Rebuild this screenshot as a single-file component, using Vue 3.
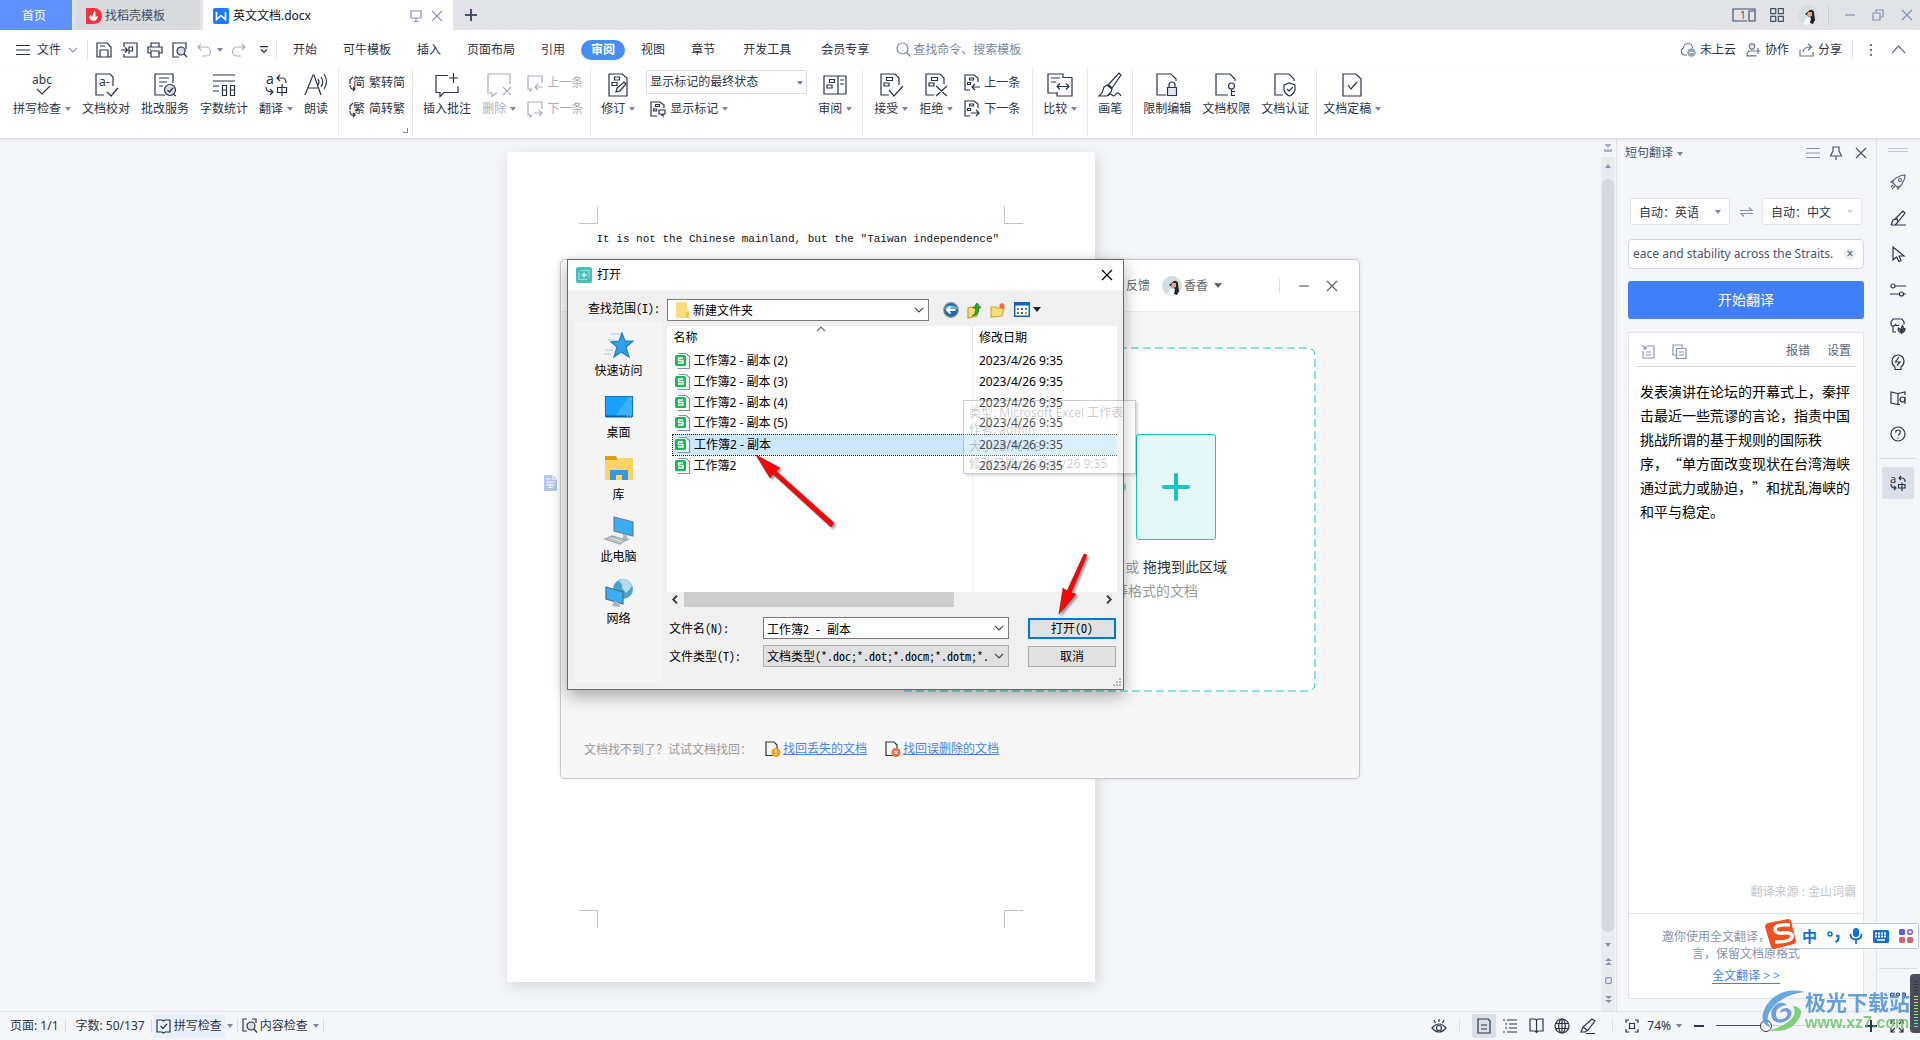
<script setup>
import { h, ref } from 'vue'

const icons = {
  menu: [14, 12, '<path d="M0 1.5h14M0 6h14M0 10.5h14"/>'],
  chev: [10, 6, '<path d="M1 .8l4 4 4-4"/>'],
  chevUp: [15, 9, '<path d="M1 8l6.5-7L14 8"/>'],
  save: [16, 16, '<path d="M1 1h10l4 4v10H1zM4 15V8h8v7M4 4h5"/>'],
  exportPdf: [17, 16, '<path d="M3 5V1h13v14H3v-3M0 8h6M4 5.5L6.500 8 4 10.500M8 12V5h3.500v4H8"/>'],
  print: [16, 16, '<path d="M4 5V1h8v4M4 11H1V5h14v6h-3M4 9h8v6H4zM3 7.500h1"/>'],
  preview: [16, 16, '<path d="M7 15H1V1h13v6"/><circle cx="9" cy="9" r="4" fill="#d9dce2"/><path d="M12 12l3 3"/>'],
  undo: [14, 14, '<path d="M4 1L1 4l3 3M1 4h8a4 4 0 0 1 0 9H5"/>'],
  redo: [14, 14, '<path d="M10 1l3 3-3 3M13 4H5a4 4 0 0 0 0 9h4"/>'],
  more: [8, 8, '<path d="M0 .7h8M1 3.500L4 6.500 7 3.500"/>'],
  search: [15, 15, '<circle cx="6.500" cy="6.500" r="5.500"/><path d="M10.500 10.500l4 4"/>'],
  abc: [24, 24, '<text x="12" y="11" text-anchor="middle" font-size="12" fill="currentColor" stroke="none">abc</text><path d="M7 16l5 5 8-8"/>'],
  proof: [24, 24, '<path d="M10 22H2V1h14l3 3v9"/><text x="5" y="13" font-size="12" fill="currentColor" stroke="none">a-</text><path d="M13 19l4 4 7-8"/>'],
  service: [24, 24, '<path d="M12 22H2V1h18v9M6 5h10M6 9h8M6 13h4"/><circle cx="17" cy="17" r="5.500" fill="#d9dce2"/><path d="M14.500 17l2 2 3.500-4M20 21l3 2"/>'],
  count: [24, 24, '<path d="M1 2h22M1 8h22M1 13h6M1 18h6M10.500 12.500h4v10h-4zM18.500 12.500h4v10h-4zM10.500 17h4M18.500 17h4"/>'],
  trans: [24, 24, '<text x="2" y="11" font-size="14" fill="currentColor" stroke="none">a</text><path d="M16 2l-3 3 3 3M13 5h5q4 0 4 5M2 14q0 5 6 5M6 16l3 3-3 3M13.500 14.500h9v5h-9zM18 11v12"/>'],
  transSm: [16, 16, '<text x="0" y="8" font-size="11" fill="currentColor" stroke="none">a</text><path d="M11 1L9 3l2 2M9 3h3q3 0 3 4M1 9q0 4 4 4M4 11l2 2-2 2M8.500 9.500h6.500v3.500H8.500zM12 7.500V16"/>'],
  read: [24, 24, '<path d="M1 22L9 2h1l7 20M4 15h10M14 6q2 3 0 6M17 4q3.500 5 0 10M20 1q5 7 0 15"/>'],
  toSimp: [16, 18, '<text x="4" y="13" font-size="12" fill="currentColor" stroke="none">简</text><path d="M4 3L1 6v4M1 11q0 5 5 4M4 13l2 2-2 2"/>'],
  toTrad: [16, 18, '<text x="4" y="13" font-size="12" fill="currentColor" stroke="none">繁</text><path d="M4 3L1 6v4M1 11q0 5 5 4M4 13l2 2-2 2"/>'],
  addNote: [24, 24, '<path d="M13 2.500H1v17h4v4l4-4h14v-6M18.500 0v10M14 5h9"/>'],
  delNote: [24, 24, '<path d="M23 11V1H1v19h4v3.500l5-4M16 14l8 8M24 14l-8 8"/>'],
  notePrev: [16, 16, '<path d="M15 8V1H1v13h2v2l2-2M16 12H8M11 9l-3 3 3 3"/>'],
  noteNext: [16, 16, '<path d="M15 8V1H1v13h2v2l2-2M7 12h8M12 9l3 3-3 3"/>'],
  revise: [20, 24, '<path d="M1 1h13l5 4v18H1zM6.500 4h5v3h-5zM4 9.500h5v3H4z"/><path d="M8 19l1-4 7-6 2 2-6 7z" fill="#e3e5ea"/>'],
  showMark: [16, 16, '<path d="M7 15H1V1h9l4 3v3M5.500 3.500h4v2h-4zM3.500 8h3v2h-3zM9 9h6v4h-2v2l-2-2H9z"/>'],
  pane: [24, 24, '<path d="M1 3h22v18H1zM15 3v18M17 7h4M17 11h4M6.500 6.500h5v3h-5zM4 12h5v3H4z"/>'],
  accept: [24, 24, '<path d="M10 22H2V1h14l4 4v7M7.500 4.500h6v3h-6zM5 10h5v3H5zM10 17l5 6 9-10"/>'],
  reject: [24, 24, '<path d="M10 22H2V1h14l4 4v6M7.500 4.500h6v3h-6zM5 10h5v3H5zM12 13l11 10M23 13L12 23"/>'],
  revPrev: [16, 18, '<path d="M6 16H1V1h9l4 3v4M5.500 4h4v2h-4zM3.500 8.500h3v2h-3zM16 13H8M11 10l-3 3 3 3"/>'],
  revNext: [16, 18, '<path d="M6 16H1V1h9l4 3v4M5.500 4h4v2h-4zM3.500 8.500h3v2h-3zM7 13h8M12 10l3 3-3 3"/>'],
  compare: [26, 24, '<path d="M16 5V1H1v19h9M16 4.500h9V23H10v-4M4 5h9M4 9h5M10 13.500h12M13 10.500l-3 3 3 3M19 10.500l3 3-3 3"/>'],
  brush: [24, 24, '<path d="M10 12L21 0l2 2-9 13M6 14l3-2 5 4-1 3-4 4H1l3-3zM9 12q4 0 5 4M10 23q2-3 4-1t4-1 5 2"/>'],
  lock: [22, 24, '<path d="M10 22H1V1h14l5 5v2M13 14v-2q0-3 3-3t3 3v2"/><path d="M11.500 14.500h9v8h-9z" fill="#e3e5ea"/>'],
  key: [22, 24, '<path d="M13 22H1V1h14l5 5v2"/><circle cx="16.500" cy="13" r="3"/><path d="M16.500 16v7M16.500 18.500H20M16.500 22.500H20"/>'],
  shield: [22, 24, '<path d="M9 22H1V1h14l5 5v2M15.500 10l5.500 2v5q-1 4-5.500 6-4.500-2-5.500-6v-5zM13 16l2 2 4-4"/>'],
  final: [20, 24, '<path d="M1 1h13l5 5v17H1zM6 12l3 4 6-7"/>'],
  switcher: [24, 14, '<path d="M15 13H1V1h22v12h-6V3h5"/><text x="8" y="11" font-size="10" fill="currentColor" stroke="none">1</text>'],
  apps: [14, 14, '<path d="M.7.700h5v5h-5zM8.300.700h5v5h-5zM.7 8.300h5v5h-5zM8.300 8.300h5v5h-5z"/>'],
  min: [10, 10, '<path d="M0 5h10"/>'],
  restore: [12, 12, '<path d="M1 4h7v7H1zM4 4V1h7v7H8"/>'],
  close: [12, 12, '<path d="M1 1l10 10M11 1L1 11"/>'],
  monitor: [12, 12, '<path d="M1 1h10v7H1zM6 8v3M3.500 11.500h5"/>'],
  plus: [12, 12, '<path d="M6 0v12M0 6h12" stroke-width="2"/>'],
  cloud: [16, 14, '<path d="M7 12H4.500a3.700 3.700 0 0 1-1-7 4.500 4.500 0 0 1 9 0"/><circle cx="11.500" cy="9.500" r="4.300" fill="#98a1b8" stroke="none"/><path d="M9.500 9.500h4" stroke="#fff"/>'],
  people: [15, 14, '<circle cx="6" cy="3.500" r="2.700"/><path d="M9 8H5q-4 0-4 4.800h9.500M12 5v6M9.500 8h5"/>'],
  share: [15, 14, '<path d="M1 7v6h13V9M4 9q0-5 8-5M9 .8L12.500 4 9 7.200"/>'],
  dots: [4, 14, '<path d="M1 1h2v2H1zM1 6h2v2H1zM1 11h2v2H1z" fill="currentColor" stroke="none"/>'],
  pin: [14, 14, '<path d="M4 1h6v4l2.500 5h-11L4 5zM7 10v4"/>'],
  swap: [13, 10, '<path d="M0 3.500h12L9 .5M13 6.500H1l3 3"/>'],
  insert: [14, 15, '<path d="M6 2h7v12H2V7M1 1l4 4M5 2v3H2M5 8h5M5 11h5"/>'],
  copy: [15, 15, '<path d="M4 11H1V1h9v3M4.500 4.500h9.500v10H4.500zM7 8h5M7 11h5"/>'],
  handle: [20, 6, '<path d="M0 1.500h20M0 4.500h20" stroke="#c3c8d2"/>'],
  rocket: [16, 16, '<path d="M5 11L3 9q0-4 5-6 3-2 7-2 0 4-2 7-2 5-6 5zM4 6L1 8l2 1M10 12l-2 3-1-2M1 13l2-2M2 15l3-3"/><circle cx="10" cy="6" r="1.500"/>'],
  pen: [16, 16, '<path d="M1 15h15M1 15l2-5 4-1 1 3-3 3M5 9L13 1l2 2-7 9"/>'],
  cursor: [14, 16, '<path d="M2 1v13l3.500-3 2.500 4.500 2-1-2-4.500h5z"/>'],
  sliders: [16, 14, '<circle cx="3" cy="3" r="2"/><circle cx="11.500" cy="11" r="2"/><path d="M5 3h11M0 11h9.500M13.500 11H16"/>'],
  store: [16, 16, '<path d="M6 14H3V8M3 8Q1 8 1 5.500V4l2-3h9l2 3v2.500M3 8q2 0 2.500-1.500Q7 8.500 9 7"/><path d="M11.500 15q-4.500-2-3-5 2.500 1 3 5-1-5 1-7.500 2 3-1 7.500 0-4 3.500-4.500 0 3.500-3.500 4.500z" fill="#9aa1b1"/>'],
  bulb: [14, 16, '<path d="M4 13q-3-2-3-6a6 6 0 0 1 12 0q0 4-3 6v2.500H4zM8 3L4.500 8H9L6 11.500"/>'],
  book: [16, 14, '<path d="M8 2.500L1 1v11l7 1.500zM8 2.500L15 1v3M8 13.500h2"/><circle cx="12.500" cy="8.500" r="2.500"/><path d="M15 6v7"/>'],
  help: [16, 16, '<circle cx="8" cy="8" r="7"/><path d="M5.700 6.500q0-2.500 2.300-2.500t2.300 2-2.300 3.500M8 11.500v1"/>'],
  dots3: [16, 5, '<circle cx="2" cy="2.500" r="1.500"/><circle cx="8" cy="2.500" r="1.500"/><circle cx="14" cy="2.500" r="1.500"/>'],
  bookCheck: [15, 14, '<path d="M6 1H1v12h5l1.500 1 1.500-1h5V1H9L7.500 2zM4.500 7l2.500 2.500L11 5"/>'],
  bookFind: [15, 15, '<path d="M5 1H1v12h4M10 1h4v4"/><circle cx="9" cy="8" r="4" fill="#d9dce2"/><path d="M12 11l3 3.500"/>'],
  eye: [16, 16, '<path d="M1 10q7-8 14 0-7 8-14 0z"/><circle cx="8" cy="10" r="2.500"/><path d="M8 1v3M3 2l1.500 3M13 2l-1.500 3"/>'],
  pageView: [14, 16, '<path d="M1 1h10l2 2v12H1zM4 7h6M4 11h6"/>'],
  outline: [14, 14, '<path d="M0 1h2M4 1h10M2 5h2M6 5h8M2 9h2M6 9h8M0 13h2M4 13h10"/>'],
  webBook: [15, 15, '<path d="M7.500 2L6 1H1v12h5l1.500 1.500L9 13h5V1H9zM7.500 2v12"/>'],
  globe: [16, 16, '<circle cx="8" cy="8" r="7"/><ellipse cx="8" cy="8" rx="3.300" ry="7"/><path d="M1.500 5.500h13M1.500 10.500h13M8 1v14"/>'],
  penLine: [16, 16, '<path d="M1 14l2-5L12 1l3 2-7 9-3 2zM3 9l4 3M6 15.500h9"/>'],
  fit: [14, 14, '<path d="M1 4V1h3M10 1h3v3M13 10v3h-3M4 13H1v-3M4.500 4.500h5v5h-5z"/>'],
  full: [14, 14, '<path d="M1 5V1h4M9 1h4v4M13 9v4H9M5 13H1V9M1 1l4 4M13 1L9 5M13 13L9 9M1 13l4-4"/>'],
  split: [8, 9, '<path d="M1 0h6v1L4 4 1 1zM0 8V5h2v1h1V5h2v1h1V5h2v3z" fill="#a9b1c3" stroke="none"/>'],
  dblUp: [7, 8, '<path d="M3.500 0L7 3H0zM3.500 4L7 7H0z" fill="currentColor" stroke="none"/>'],
  dblDown: [7, 8, '<path d="M3.500 4L7 1H0zM3.500 8L7 5H0z" fill="currentColor" stroke="none"/>'],
  square: [7, 7, '<rect x=".7" y=".7" width="5.600" height="5.600" rx="1"/>'],
  docTag: [13, 16, '<path d="M0 0h9l4 4v12H0z" fill="#b3c7ea" stroke="none"/><path d="M9 0v4h4M2.500 4h4M2.500 7h8M2.500 10h8M6.500 9v4M4 12.500h5" stroke="#fff"/>'],
  docer: [16, 16, '<path d="M0 0h8a8 8 0 0 1 0 16H0z" fill="#f4333f" stroke="none"/><path d="M7 13q-5-2-3-6 3 1 3 6zM7 13Q5 7 9 2.500 11 8 7 13zM7 13q0-4 5-5-1 5-5 5z" fill="#fff" stroke="none"/>'],
  writer: [16, 16, '<rect width="16" height="16" rx="2" fill="#1a7df5" stroke="none"/><path d="M3.500 4v7.500l4.500-4 4.500 4V4" stroke="#fff" stroke-width="1.600"/>'],
  avatar: [20, 20, '<circle cx="10" cy="10" r="10" fill="#d3dde2" stroke="none"/><path d="M5 19l3-6 5-1 1 6-4 2z" fill="#f4fafb" stroke="none"/><path d="M7 9l5-4q4-1 4 3l1 7-2 4-3-1 1-5z" fill="#2a2326" stroke="none"/><path d="M10 7l4 0 0 4-3 1-2-2z" fill="#dfa79a" stroke="none"/><path d="M13 4l3 1-1 1z" fill="#d9b25c" stroke="none"/>'],
  appIcon: [16, 16, '<rect width="16" height="16" rx="2" fill="#45bfbc" stroke="none"/><path d="M5 3.500h8v7M11 12.500H3v-7" stroke="#9fe0de"/><path d="M3 3.500h.1M13 12.500v.1" stroke="#9fe0de"/><path d="M8 5.500v5M5.500 8h5" stroke="#e4f9f8" stroke-width="1.600"/>'],
  star: [30, 26, '<path d="M7 2h10M4 8h7M1 18h8M0 22h7" stroke="#9ccdf0"/><path d="M18 1l3 8h8l-7 6 3 10-8-5-7 5 3-10-6-5 8-1z" fill="#2f9fe8" stroke="#1b7fc7"/>'],
  desktop: [28, 22, '<path d="M.5.500h27v20H.500z" fill="#16a0fb" stroke="#0f78c8"/><path d="M10 20L24 1h3v19z" fill="#3bb1ff" stroke="none"/><path d="M1 20.500h26" stroke="#0a5f9f" stroke-width="2"/><path d="M22 20h1M25 20h1" stroke="#fff"/>'],
  library: [28, 26, '<path d="M0 0h11l2 4H0z" fill="#dc9d10" stroke="none"/><path d="M0 4h12l2-2h14v22H0z" fill="#fdd466" stroke="none"/><path d="M5 24V14h18v10h-6v-5h-6v5z" fill="#3d96dd" stroke="none"/>'],
  pc: [30, 28, '<path d="M10 0l19 5v14l-19-5z" fill="#38aef6" stroke="#6a7f8f"/><path d="M19 17l4 1v3l3 1-3 2-8-2 4-1z" fill="#a9b6c0" stroke="none"/><path d="M1 22l7-3 14 4-6 4z" fill="#d4dade" stroke="#9aa6ae"/><path d="M4 21.500l13 4M7 20l13 4" stroke="#9aa6ae" stroke-width=".7"/>'],
  network: [28, 28, '<circle cx="18" cy="10" r="10" fill="#4ba3cd" stroke="none"/><path d="M13 2q5 2 4 7l4 5q5-4 6-8-4-6-9-6z" fill="#b5dcec" stroke="none"/><path d="M1 8l17 5v12L1 20z" fill="#38aef6" stroke="#4c6d84"/><path d="M9 22l4 1v2l3 1-2 2-7-1z" fill="#a9b6c0" stroke="none"/>'],
  folder: [14, 16, '<path d="M1 0h11v6l2 3v7H1z" fill="#fbdc7f" stroke="none"/><path d="M11 10h3v6h-3z" fill="#f0c54d" stroke="none"/>'],
  back: [16, 16, '<circle cx="8" cy="8" r="7.300" fill="#1d6aa8" stroke="#86919b"/><path d="M1.500 7a7 6 0 0 1 13 0z" fill="#6fb0dd" stroke="none"/><path d="M12.500 8H4M7.500 4.500L4 8l3.500 3.500" stroke="#fff" stroke-width="2"/>'],
  up: [15, 16, '<path d="M1 6l4-1 1 1h6l-2 8-9 2z" fill="#f8dc75" stroke="#c59e2c"/><path d="M5 14q4-2 3.500-8H6l4-5 4 5h-2.500q1 7-6.500 8z" fill="#2da52b" stroke="#157019" stroke-width=".6"/>'],
  newDir: [16, 16, '<path d="M1 5h5l1 1h7l-2 8-11 1z" fill="#f8dc75" stroke="#d0a63b"/><path d="M12 1v6M9 4h6M10 2l4 4M14 2l-4 4" stroke="#f0652d"/>'],
  view: [16, 15, '<path d="M.7.700h14.600v13.600H.7z" fill="#fff" stroke="#0a64c8" stroke-width="1.500"/><path d="M0 0h16v3.500H0z" fill="#0a64c8" stroke="none"/><path d="M3 7h2" stroke="#8a5db0" stroke-width="2"/><path d="M3 11h2" stroke="#e0502c" stroke-width="2"/><path d="M7 7h2M7 11h2" stroke="#2260a0" stroke-width="2"/><path d="M11 7h2" stroke="#2c9a3e" stroke-width="2"/><path d="M11 11h2" stroke="#d88a1c" stroke-width="2"/>'],
  sheet: [15, 16, '<path d="M3.500.500H11l3.500 3v12H2.500" fill="#fff" stroke="#8490a8"/><rect x="0" y="2" width="11" height="11" rx="1.500" fill="#1db954" stroke="none"/><path d="M8 5H3.500v2.500H8V10H3" stroke="#fff" stroke-width="1.300"/>'],
  lost: [16, 16, '<path d="M8 14.500H1V1h8l3 3v4" stroke="#333"/><circle cx="11" cy="11.500" r="4.500" fill="#f4a024" stroke="none"/><path d="M11 9v3M11 13v1" stroke="#fff"/>'],
  removed: [16, 16, '<path d="M8 14.500H1V1h8l3 3v4" stroke="#333"/><circle cx="11" cy="11.500" r="4.500" fill="#f06a3c" stroke="none"/><path d="M9.500 10l3 3M12.500 10l-3 3" stroke="#fff"/>'],
  arrL: [6, 9, '<path d="M5 .8L1.200 4.500 5 8.200" stroke-width="2"/>'],
  arrR: [6, 9, '<path d="M1 .8l3.800 3.700L1 8.200" stroke-width="2"/>'],
  grip: [9, 9, '<path d="M7 1h2M7 4h2M4 4h2M7 7h2M4 7h2M1 7h2" stroke="#b5b5b5" stroke-width="2"/>'],
  bigPlus: [28, 28, '<path d="M14 2v24M2 14h24" stroke-width="4" stroke-linecap="round"/>'],
  sogou: [32, 30, '<path d="M3 4l20-4q2 0 3 2l5 20q0 2-2 3L9 30q-2 0-3-2L0 8q0-3 3-4z" fill="#f4511e" stroke="none"/><path d="M25 6Q10 5 10 10t9 4 8 4-17 5" stroke="#fff" stroke-width="3.500"/>'],
  punct: [12, 12, '<circle cx="3" cy="4" r="2" stroke-width="1.500"/><path d="M9 6h2.500v2.500q0 2.500-3 3.500" stroke-width="2"/>'],
  mic: [14, 16, '<rect x="4" y="0" width="6" height="9" rx="3" fill="currentColor" stroke="none"/><path d="M1.500 6q0 5.500 5.500 5.500T12.500 6M7 12v4" stroke-width="1.800"/>'],
  keyboard: [16, 13, '<rect width="16" height="13" rx="1.500" fill="currentColor" stroke="none"/><path d="M2 3.500h12M2 6.500h12" stroke="#fff" stroke-width="2" stroke-dasharray="2 1"/><path d="M4 10h8" stroke="#fff" stroke-width="1.500"/>'],
  tiles: [14, 14, '<rect width="6" height="6" rx="1.500" fill="#5a5ee0" stroke="none"/><circle cx="11" cy="3" r="2.300" stroke="#7a5bd0" stroke-width="1.600"/><rect y="8" width="6" height="6" rx="1.500" fill="#d6607c" stroke="none"/><rect x="8" y="8" width="6" height="6" rx="1.500" fill="#cc6670" stroke="none"/>'],
  siteLogo: [44, 42, '<path d="M44 2Q18-4 5 16-4 33 10 38 2 28 13 16 24 4 44 2z" fill="#4f9bdc" stroke="none"/><path d="M26 15q-12 2-11 10 1 7 9 3 5-5 0-7-4 0-4 3-2-6 6-6 8 3 2 11-9 7-16 1-5-9 4-16 5-3 10 1z" fill="#5a8fd6" stroke="none"/><path d="M8 40q20 4 29-10 8-12-5-14 5 9-5 16-8 6-19 8z" fill="#6ccb5f" stroke="none"/>']
}

const Ico = (props) => {
  const [w, hgt, body] = icons[props.n]
  return h('svg', {
    width: w,
    height: hgt,
    viewBox: `0 0 ${w} ${hgt}`,
    fill: 'none',
    stroke: 'currentColor',
    'stroke-width': 1.2,
    'aria-hidden': 'true',
    class: 'ico',
    innerHTML: body
  })
}
Ico.props = ['n']

const menuTabs = ['开始', '可牛模板', '插入', '页面布局', '引用', '审阅', '视图', '章节', '开发工具', '会员专享']

const ribbon = [
  { items: [
    { icon: 'abc', label: '拼写检查', caret: true },
    { icon: 'proof', label: '文档校对' },
    { icon: 'service', label: '批改服务' },
    { icon: 'count', label: '字数统计' },
    { icon: 'trans', label: '翻译', caret: true },
    { icon: 'read', label: '朗读' }
  ] },
  { corner: true, tight: true, items: [{ rows: [{ icon: 'toSimp', label: '繁转简' }, { icon: 'toTrad', label: '简转繁' }] }] },
  { tight: true, items: [
    { icon: 'addNote', label: '插入批注' },
    { icon: 'delNote', label: '删除', caret: true, off: true },
    { rows: [{ icon: 'notePrev', label: '上一条', off: true }, { icon: 'noteNext', label: '下一条', off: true }] }
  ] },
  { items: [
    { icon: 'revise', label: '修订', caret: true },
    { rows: [{ select: '显示标记的最终状态' }, { icon: 'showMark', label: '显示标记', caret: true, inset: true }] },
    { icon: 'pane', label: '审阅', caret: true }
  ] },
  { loose: true, items: [
    { icon: 'accept', label: '接受', caret: true },
    { icon: 'reject', label: '拒绝', caret: true },
    { rows: [{ icon: 'revPrev', label: '上一条' }, { icon: 'revNext', label: '下一条' }] }
  ] },
  { items: [{ icon: 'compare', label: '比较', caret: true }] },
  { items: [{ icon: 'brush', label: '画笔' }] },
  { tight: true, items: [
    { icon: 'lock', label: '限制编辑' },
    { icon: 'key', label: '文档权限' },
    { icon: 'shield', label: '文档认证' }
  ] },
  { last: true, items: [{ icon: 'final', label: '文档定稿', caret: true }] }
]

const places = [
  { icon: 'star', label: '快速访问' },
  { icon: 'desktop', label: '桌面' },
  { icon: 'library', label: '库' },
  { icon: 'pc', label: '此电脑' },
  { icon: 'network', label: '网络' }
]

const files = ['工作簿2 - 副本 (2)', '工作簿2 - 副本 (3)', '工作簿2 - 副本 (4)', '工作簿2 - 副本 (5)', '工作簿2 - 副本', '工作簿2']
const selected = '工作簿2 - 副本'
const fileName = ref(selected)
const phrase = ref('eace and stability across the Straits.')
const zoom = ref(33)
const rail = ['rocket', 'pen', 'cursor', 'sliders', 'store', 'bulb', 'book', 'help']
</script>

<template>
  <div class="app">
    <header class="tabbar">
      <button class="tab home">首页</button>
      <button class="tab docer"><Ico n="docer" />找稻壳模板</button>
      <div class="tab current">
        <Ico n="writer" /><span class="grow">英文文档.docx</span>
        <Ico n="monitor" class="dim" /><button aria-label="关闭标签"><Ico n="close" /></button>
      </div>
      <button class="new-tab" aria-label="新建"><Ico n="plus" /></button>
      <div class="window-tools">
        <Ico n="switcher" /><Ico n="apps" /><Ico n="avatar" class="ava" />
        <i class="vline"></i>
        <button aria-label="最小化"><Ico n="min" /></button>
        <button aria-label="还原"><Ico n="restore" /></button>
        <button aria-label="关闭"><Ico n="close" /></button>
      </div>
    </header>

    <nav class="menu">
      <button class="file"><Ico n="menu" />文件<Ico n="chev" class="dim" /></button>
      <i class="vline"></i>
      <div class="quick">
        <button aria-label="保存"><Ico n="save" /></button>
        <button aria-label="输出为PDF"><Ico n="exportPdf" /></button>
        <button aria-label="打印"><Ico n="print" /></button>
        <button aria-label="打印预览"><Ico n="preview" /></button>
        <button class="off" aria-label="撤销"><Ico n="undo" /><i class="caret"></i></button>
        <button class="off" aria-label="恢复"><Ico n="redo" /></button>
        <button class="more" aria-label="更多"><Ico n="more" /></button>
      </div>
      <i class="vline"></i>
      <div class="menu-tabs">
        <button v-for="t in menuTabs" :key="t" :class="{ on: t === '审阅', wide: t === '开发工具' || t === '会员专享' }">{{ t }}</button>
      </div>
      <button class="finder"><Ico n="search" />查找命令、搜索模板</button>
      <div class="cloud-tools">
        <button><Ico n="cloud" />未上云</button>
        <button><Ico n="people" />协作</button>
        <button><Ico n="share" />分享</button>
        <i class="vline"></i>
        <button aria-label="更多选项"><Ico n="dots" /></button>
        <button aria-label="收起功能区"><Ico n="chevUp" /></button>
      </div>
    </nav>

    <section class="ribbon">
      <div v-for="(g, gi) in ribbon" :key="gi" class="group" :class="{ loose: g.loose, tight: g.tight, last: g.last }">
        <template v-for="(it, ii) in g.items" :key="ii">
          <div v-if="it.rows" class="stack">
            <template v-for="(r, ri) in it.rows" :key="ri">
              <span v-if="r.select" class="pick">
                <select aria-label="标记状态"><option>{{ r.select }}</option></select><i class="caret"></i>
              </span>
              <button v-else class="small" :class="{ off: r.off, inset: r.inset }">
                <Ico :n="r.icon" />{{ r.label }}<i v-if="r.caret" class="caret"></i>
              </button>
            </template>
          </div>
          <button v-else class="big" :class="{ off: it.off }">
            <Ico :n="it.icon" />
            <span class="cap">{{ it.label }}<i v-if="it.caret" class="caret"></i></span>
          </button>
        </template>
        <i v-if="g.corner" class="corner"></i>
      </div>
    </section>

    <main class="workspace">
      <div class="canvas">
        <article class="page">
          <div class="marks"><i class="tl"></i><i class="tr"></i></div>
          <p>It is not the Chinese mainland, but the "Taiwan independence"</p>
          <div class="marks foot"><i class="bl"></i><i class="br"></i></div>
          <Ico n="docTag" class="doc-tag" />
        </article>
      </div>

      <div class="vscroll">
        <Ico n="split" />
        <div class="track">
          <i class="tri up"></i>
          <i class="thumb"></i>
          <i class="tri down"></i>
          <Ico n="dblUp" /><Ico n="square" /><Ico n="dblDown" />
        </div>
      </div>

      <aside class="panel">
        <div class="panel-head">
          <span class="grow">短句翻译<i class="caret"></i></span>
          <Ico n="menu" class="dim list-icon" /><Ico n="pin" /><Ico n="close" />
        </div>
        <div class="langs">
          <span class="lang"><select aria-label="源语言"><option>自动：英语</option></select><i class="caret"></i></span>
          <Ico n="swap" />
          <span class="lang pale"><select aria-label="目标语言"><option>自动：中文</option></select><i class="caret"></i></span>
        </div>
        <div class="phrase">
          <input v-model="phrase" aria-label="待翻译内容" type="text" />
          <button aria-label="清空">×</button>
        </div>
        <button class="go">开始翻译</button>
        <section class="result">
          <div class="result-head">
            <Ico n="insert" /><Ico n="copy" /><i class="grow"></i>
            <a href="#">报错</a><a href="#">设置</a>
          </div>
          <p class="translated">发表演讲在论坛的开幕式上，秦抨击最近一些荒谬的言论，指责中国挑战所谓的基于规则的国际秩序，“单方面改变现状在台湾海峡通过武力或胁迫，”和扰乱海峡的和平与稳定。</p>
          <p class="source">翻译来源 : 金山词霸</p>
          <div class="promo">
            <p>邀你使用全文翻译，支持多种语言，保留文档原格式</p>
            <a href="#">全文翻译 &gt; &gt;</a>
          </div>
        </section>
      </aside>

      <nav class="rail">
        <Ico n="handle" />
        <button v-for="r in rail" :key="r" :aria-label="r"><Ico :n="r" /></button>
        <hr />
        <button class="on" aria-label="翻译"><Ico n="transSm" /></button>
        <i class="grow"></i>
        <hr />
        <button class="tail" aria-label="更多工具"><Ico n="dots3" /></button>
      </nav>
    </main>

    <footer class="status">
      <span class="cell">页面: 1/1</span>
      <span class="cell">字数: 50/137</span>
      <button class="cell check"><span class="lit"><Ico n="bookCheck" />拼写检查</span><i class="caret"></i></button>
      <button class="cell check"><span class="lit"><Ico n="bookFind" />内容检查</span><i class="caret"></i></button>
      <i class="grow"></i>
      <Ico n="eye" />
      <i class="vline"></i>
      <div class="views">
        <button class="on" aria-label="页面视图"><Ico n="pageView" /></button>
        <button aria-label="大纲"><Ico n="outline" /></button>
        <button aria-label="阅读版式"><Ico n="webBook" /></button>
        <button aria-label="Web版式"><Ico n="globe" /></button>
        <button aria-label="写作模式"><Ico n="penLine" /></button>
      </div>
      <i class="vline"></i>
      <button class="fit"><Ico n="fit" />74%<i class="caret"></i></button>
      <button class="minus" aria-label="缩小"></button>
      <input v-model="zoom" type="range" aria-label="显示比例" />
      <button aria-label="放大"><Ico n="plus" /></button>
      <button class="full" aria-label="全屏"><Ico n="full" /></button>
    </footer>

    <div class="layer">
      <section class="recover">
        <header>
          <span>反馈</span><Ico n="avatar" class="ava" /><span>香香</span><i class="caret big-caret"></i>
          <i class="vline"></i><Ico n="min" /><Ico n="close" />
        </header>
        <div class="drop">
          <svg class="dash" aria-hidden="true"><rect x="1" y="1" rx="7" /></svg>
          <button class="add" aria-label="添加文档"><Ico n="bigPlus" /></button>
          <p><span>或</span> 拖拽到此区域</p>
          <p class="kinds">等格式的文档</p>
          <i class="dot"></i>
        </div>
        <div class="help-line">
          <span>文档找不到了？试试文档找回：</span>
          <a href="#"><Ico n="lost" /><u>找回丢失的文档</u></a>
          <a href="#"><Ico n="removed" /><u>找回误删除的文档</u></a>
        </div>

        <form class="open" @submit.prevent>
          <header><Ico n="appIcon" /><span class="grow">打开</span><button type="button" aria-label="关闭"><Ico n="close" /></button></header>
          <div class="look">
            <label for="look-in">查找范围(I):</label>
            <span class="combo folder"><Ico n="folder" /><select id="look-in"><option>新建文件夹</option></select><Ico n="chev" /></span>
            <Ico n="back" /><Ico n="up" /><Ico n="newDir" /><span class="view"><Ico n="view" /><i class="caret"></i></span>
          </div>
          <div class="main">
            <nav class="places">
              <button v-for="p in places" :key="p.label" type="button"><span class="pic"><Ico :n="p.icon" /></span>{{ p.label }}</button>
            </nav>
            <div class="content">
              <div class="list">
                <Ico n="chev" class="sort" />
                <table>
                  <thead><tr><th>名称</th><th>修改日期</th></tr></thead>
                  <tbody>
                    <tr v-for="f in files" :key="f" :class="{ sel: f === selected }">
                      <td><span class="name"><Ico n="sheet" />{{ f }}</span></td>
                      <td>2023/4/26 9:35</td>
                    </tr>
                    <tr class="rest"><td></td><td></td></tr>
                  </tbody>
                </table>
              </div>
              <div class="hscroll"><Ico n="arrL" /><i></i><Ico n="arrR" /></div>
              <div class="fields">
                <label for="fname">文件名(N):</label>
                <span class="combo"><input id="fname" v-model="fileName" type="text" /><Ico n="chev" /></span>
                <button type="submit" class="primary">打开(O)</button>
                <label for="ftype">文件类型(T):</label>
                <span class="combo grey"><select id="ftype"><option>文档类型(*.doc;*.dot;*.docm;*.dotm;*.</option></select><Ico n="chev" /></span>
                <button type="button">取消</button>
              </div>
            </div>
          </div>
          <Ico n="grip" class="grip" />
          <div class="tip">
            <p>类型: Microsoft Excel 工作表</p>
            <p>作者: admin</p>
            <p>大小: 8.76 KB</p>
            <p>修改日期: 2023/4/26 9:35</p>
          </div>
        </form>

        <svg class="arrows" viewBox="0 0 800 520" aria-hidden="true">
          <g fill="#f60606" stroke="#a01010" stroke-width=".6">
            <path d="M195 195l24 13-4 3 58 52-3 4-58-53-3 4z" />
            <path d="M498 354l4-26 4 3 17-37 3 1-16 38 5 1z" />
          </g>
        </svg>
      </section>
    </div>

    <div class="ime">
      <Ico n="sogou" class="sogou" />
      <b>中</b><Ico n="punct" /><Ico n="mic" /><Ico n="keyboard" /><Ico n="tiles" />
    </div>
    <div class="brand">
      <Ico n="siteLogo" />
      <div><strong>极光下载站</strong><em>www.xz7.com</em></div>
    </div>
    <i class="meter"></i>
  </div>
</template>

<style>
body { margin: 0; background: #f5f6f9; }
.ico { flex: none; display: block; overflow: visible; }
</style>

<style scoped>
.app, .app * { box-sizing: border-box; }
.app {
  position: relative;
  min-height: 100vh;
  display: flex;
  flex-direction: column;
  font: 12px/18px "Noto Sans", "Noto Sans CJK SC", sans-serif;
  text-spacing-trim: space-all;
  color: #2b3347;
  overflow: hidden;
}
button, input, select { font: inherit; color: inherit; margin: 0; padding: 0; border: 0; background: none; }
button { white-space: nowrap; }
select { appearance: none; outline: 0; }
input { outline: 0; min-width: 0; }
p { margin: 0; }
.grow { flex: 1; }
.dim { color: #8a94ab; }
.off { color: #a9aeb8; }
.vline { width: 1px; height: 20px; background: #dcdfe5; flex: none; }
.caret {
  display: inline-block;
  flex: none;
  border: 3px solid transparent;
  border-top: 4px solid #7d879c;
  border-bottom: 0;
}

/* tabs */
.tabbar { height: 30px; display: flex; background: #e1e3e7; }
.tab { display: flex; align-items: center; gap: 4px; margin-right: 3px; padding-top: 1px; }
.home { width: 72px; padding-right: 4px; justify-content: center; background: #6191ff; color: #fff; }
.docer { width: 125px; padding-left: 11px; background: #d8dadd; color: #454e60; gap: 3px; }
.current { width: 250px; margin: 0; padding: 1px 10px 0; background: #fff; color: #10141f; }
.current button { display: flex; margin-left: 5px; color: #8a94ab; }
.new-tab { width: 36px; display: flex; align-items: center; justify-content: center; color: #45506a; }
.window-tools { margin-left: auto; display: flex; align-items: center; gap: 14px; padding-right: 7px; color: #45506a; }
.window-tools button { display: flex; margin-left: 3px; color: #8492b5; }
.window-tools .vline { background: #c8ccd4; margin-right: -1px; margin-left: -4px; }

/* menu */
.menu { height: 38px; display: flex; align-items: center; background: #fff; padding-top: 1px; }
.menu button { display: flex; align-items: center; }
.file { gap: 7px; padding: 0 9px 0 16px; }
.quick { display: flex; align-items: center; gap: 9px; padding: 0 8px; }
.quick .off { gap: 6px; }
.quick .more { margin-left: 5px; }
.menu-tabs { display: flex; align-items: center; padding-left: 3px; }
.menu-tabs button { height: 20px; padding: 0 13px; }
.menu-tabs .wide { padding: 0 15px; }
.menu-tabs .on { padding: 0 10px; margin: 0 3px; border-radius: 10px; background: #468ef1; color: #fff; font-weight: 700; }
.finder { gap: 2px; margin-left: 12px; color: #7d879c; }
.cloud-tools { margin-left: auto; display: flex; align-items: center; gap: 10px; padding-right: 14px; color: #2b3347; }
.cloud-tools button { gap: 4px; }
.cloud-tools .vline + button { margin: 0 8px 0 6px; }
.cloud-tools .ico { color: #6a7489; }

/* ribbon */
.ribbon { display: flex; height: 71px; background: #fff; border-bottom: 1px solid #dfe1e5; padding-left: 3px; box-shadow: 0 1px 3px #0000001a; z-index: 1; }
.group { position: relative; display: flex; align-items: flex-start; gap: 11px; height: 68px; padding: 2px 10px 0; border-right: 1px solid #e6e8ec; }
.group.loose { padding: 2px 12px 0 11px; }
.group.tight { padding-right: 7px; }
.group.last { padding-left: 6px; border: 0; }
.big { display: flex; flex-direction: column; align-items: center; gap: 3px; padding-top: 3px; }
.cap { display: flex; align-items: center; gap: 4px; }
.stack { display: flex; flex-direction: column; }
.small { display: flex; align-items: center; gap: 4px; height: 26px; }
.small.inset { padding-left: 4px; }
.pick { position: relative; display: flex; width: 161px; height: 26px; align-items: flex-start; }
.pick select { width: 100%; height: 24px; border: 1px solid #d8dbe1; border-radius: 2px; padding-left: 3px; }
.pick .caret { position: absolute; right: 4px; top: 11px; }
.corner { position: absolute; right: 4px; bottom: 3px; width: 5px; height: 5px; border: solid #7d879c; border-width: 0 1px 1px 0; }

/* workspace */
.workspace { flex: 1; display: flex; background: #f5f6f9; }
.canvas { flex: 1; display: flex; justify-content: center; padding: 13px 0 29px; }
.page { position: relative; width: 588px; display: flex; flex-direction: column; padding: 54px 72px; background: #fff; box-shadow: 2px 4px 14px #00000021; }
.page p { font: 11px/16px "Liberation Mono", monospace; color: #111; margin-top: 7px; padding-left: 18px; white-space: nowrap; }
.marks { display: flex; justify-content: space-between; }
.marks i { width: 19px; height: 18px; border: 0 solid #c4c4c4; }
.marks .tl { border-width: 0 1px 1px 0; }
.marks .tr { border-width: 0 0 1px 1px; }
.marks .bl { border-width: 1px 1px 0 0; }
.marks .br { border-width: 1px 0 0 1px; }
.foot { margin-top: auto; }
.doc-tag { position: absolute; left: 37px; top: 323px; }

.vscroll { width: 15px; display: flex; flex-direction: column; align-items: center; gap: 4px; padding: 5px 1px 0 0; color: #8a94ab; }
.track { flex: 1; width: 14px; display: flex; flex-direction: column; align-items: center; background: #e9ebf0; padding: 7px 0 8px; gap: 11px; }
.tri { border: 3px solid transparent; }
.tri.up { border-top: 0; border-bottom: 4px solid #8a94ab; }
.tri.down { border-bottom: 0; border-top: 4px solid #8a94ab; }
.thumb { flex: 1; width: 12px; border-radius: 6px; background: #d5d8e0; }

/* translation panel */
.panel { width: 261px; display: flex; flex-direction: column; border: solid #e1e3e8; border-width: 0 1px; padding: 4px 12px 12px 11px; }
.panel-head { display: flex; align-items: center; gap: 12px; height: 20px; margin: 0 -3px; color: #49536a; }
.panel-head .caret { margin-left: 4px; vertical-align: middle; }
.panel-head .list-icon { margin-right: -3px; }
.langs { display: flex; align-items: center; justify-content: space-between; margin-top: 35px; padding: 0 2px; color: #8a94ab; }
.lang { position: relative; width: 100px; height: 27px; background: #fff; border: 1px solid #e1e3e8; border-radius: 2px; color: #2b3347; }
.lang select { width: 100%; height: 25px; padding-left: 8px; font-family: "Noto Sans CJK SC", sans-serif; }
.lang .caret { position: absolute; right: 8px; top: 11px; }
.pale .caret { border-top-color: #cfd6e6; }
.phrase { display: flex; align-items: center; height: 30px; margin-top: 14px; background: #fff; border: 1px solid #d2d5dc; border-radius: 4px; padding: 0 7px 0 4px; color: #49536a; }
.phrase input { flex: 1; }
.phrase button { width: 12px; height: 12px; border-radius: 6px; background: #eceef1; line-height: 12px; }
.go { height: 38px; margin-top: 12px; border-radius: 3px; background: #417ff9; color: #fff; font-size: 14px; }
.result { flex: 1; display: flex; flex-direction: column; margin-top: 13px; background: #fff; border: 1px solid #e1e3e8; }
.result-head { display: flex; align-items: center; gap: 17px; height: 34px; margin: 0 7px; padding: 3px 5px 0; border-bottom: 1px solid #d2d5dc; color: #8a94ab; }
.result-head a { color: #5a6480; text-decoration: none; }
.translated { padding: 12px 11px 0; font: 14px/24px "Noto Sans CJK SC", sans-serif; color: #000; }
.source { margin-top: auto; padding: 0 7px 12px; text-align: right; color: #c3c6cc; }
.promo { border-top: 1px solid #e1e3e8; height: 85px; padding: 13px 32px 0; text-align: center; line-height: 17px; color: #8a94ab; display: flex; flex-direction: column; align-items: center; gap: 6px; }
.promo p { width: 168px; font-family: "Noto Sans CJK SC", sans-serif; }
.promo a { color: #417ff9; text-underline-offset: 3px; }

.rail { width: 43px; display: flex; flex-direction: column; align-items: center; padding: 8px 3px 0 2px; }
.rail button { width: 32px; height: 36px; display: flex; align-items: center; justify-content: center; }
.rail > button:first-of-type { margin-top: 11px; color: #5a6480; }
.rail hr { width: 100%; height: 1px; border: 0; margin: 6px 0 8px; background: #d9dce3; }
.rail .on { height: 32px; background: #dbe0e8; border-radius: 2px; }
.rail .tail { height: 34px; }

/* status bar */
.status { height: 29px; display: flex; align-items: center; background: #f5f6f9; border-top: 1px solid #e1e3e8; padding: 0 16px 1px 0; }
.cell { display: flex; align-items: center; height: 14px; border-right: 1px solid #d9dce3; padding: 0 6px 0 10px; }
.cell.check { padding: 0 4px 0 1px; }
.lit { display: flex; align-items: center; gap: 3px; height: 24px; padding: 0 3px; }
.cell.check:nth-of-type(1) .lit { background: #e8f1fb; }
.check .caret { margin-left: 2px; }
.status .vline { height: 14px; margin: 0 12px; }
.views { display: flex; gap: 2px; }
.views button { width: 24px; height: 24px; display: flex; align-items: center; justify-content: center; }
.views .on { background: #dbe0e8; border-radius: 2px; }
.fit { display: flex; align-items: center; gap: 8px; margin: 0 12px 0 0; }
.fit .caret { margin-left: -3px; }
.minus { width: 10px; height: 2px; background: #2b3347; margin-right: 12px; }
.status > button { flex: none; }
.status input { width: 145px; height: 12px; margin-right: 4px; appearance: none; background: linear-gradient(#45506a, #45506a) 0 50% / 33% 1px no-repeat, linear-gradient(#d2d5dc, #d2d5dc) 0 50% / 100% 1px no-repeat; }
.status input::-webkit-slider-thumb { appearance: none; width: 12px; height: 12px; border-radius: 6px; border: 1px solid #2b3347; background: #fff; }
.full { margin-left: 13px; height: 14px; }

/* document recovery window */
.layer { position: absolute; inset: 0; display: flex; align-items: center; justify-content: center; padding-bottom: 2px; z-index: 2; pointer-events: none; }
.recover { position: relative; width: 800px; height: 520px; display: flex; flex-direction: column; background: #f7f7f7; border: 1px solid #c6c8cb; border-radius: 5px; box-shadow: 0 0 4px #0000001a; pointer-events: auto; }
.recover > header { height: 52px; display: flex; align-items: center; justify-content: flex-end; padding-right: 21px; background: #fff; border-bottom: 1px solid #ececec; border-radius: 5px 5px 0 0; color: #666; }
.ava { margin: 0 2px 0 12px; }
.window-tools .ava { margin: 0; }
.big-caret { border-width: 5px 4px 0; border-top-color: #666; margin: 0 57px 0 6px; }
.recover > header .vline { margin-right: 19px; height: 14px; }
.recover > header .ico:last-child { margin-left: 17px; }
.drop { position: relative; align-self: flex-end; width: 421px; height: 345px; margin: 35px 43px 0 0; display: flex; flex-direction: column; align-items: flex-end; padding: 87px 89px 0 0; background: #fff; border-radius: 8px; font-size: 14px; line-height: 24px; color: #333; }
.dash { position: absolute; left: 0; top: 0; width: 100%; height: 100%; }
.dash rect { width: calc(100% - 2px); height: calc(100% - 2px); fill: none; stroke: #19c3bf; stroke-dasharray: 8 4; }
.add { width: 80px; height: 106px; margin-right: 11px; margin-bottom: 15px; display: flex; align-items: center; justify-content: center; background: #e6f7f7; border: 1px solid #19c3bf; border-radius: 3px; color: #19c3bf; }
.drop p span { color: #999; }
.drop .kinds { color: #999; padding-right: 29px; }
.dot { position: absolute; left: 221px; top: 135px; width: 10px; height: 10px; border-radius: 5px; background: #7fdcd9; }
.help-line { display: flex; align-items: center; margin: 48px 0 0 23px; color: #999; }
.help-line span { width: 181px; font-family: "Noto Sans CJK SC", sans-serif; }
.help-line a { display: flex; align-items: center; gap: 2px; margin-right: 18px; color: #4a84e8; }

/* file picker */
.open { position: absolute; left: 6px; top: -1px; width: 557px; height: 431px; display: flex; flex-direction: column; background: #f0f0f0; border: 1px solid #6b6b6b; color: #000; box-shadow: 0 6px 16px #00000055; }
.open > header { height: 30px; display: flex; align-items: center; gap: 5px; padding: 0 10px 0 8px; background: #fff; }
.open > header button { display: flex; }
.look { display: flex; align-items: center; height: 36px; padding-top: 3px; gap: 8px; }
.look label { width: 91px; padding-left: 20px; margin-bottom: 4px; white-space: nowrap; }
.open label, .fields button, .combo select, .combo input { font-family: "Noto Sans Mono CJK SC", "Noto Sans CJK SC", sans-serif; }
.combo { display: flex; align-items: center; height: 22px; background: #fff; border: 1px solid #7a7a7a; padding: 0 4px 0 3px; }
.combo select, .combo input { flex: 1; min-width: 0; height: 20px; }
.combo > .ico:last-child { color: #444; }
.combo.grey { background: #e1e1e1; border-color: #adadad; }
.combo.folder { width: 262px; gap: 4px; padding-left: 7px; margin-right: 6px; }
.view { display: flex; align-items: center; gap: 3px; }
.view .caret { border-width: 5px 4px 0; border-top-color: #222; }
.main { flex: 1; display: flex; gap: 4px; padding: 0 6px 6px; }
.places { width: 89px; margin-top: -4px; background: #f5f5f5; display: flex; flex-direction: column; padding-top: 8px; }
.places button { height: 62px; display: flex; flex-direction: column; align-items: center; gap: 2px; line-height: 18px; }
.pic { height: 30px; display: flex; align-items: center; }
.content { flex: 1; display: flex; flex-direction: column; }
.list { position: relative; height: 266px; background: #fff; overflow: hidden; padding-left: 5px; }
.sort { position: absolute; left: 149px; top: 0; transform: rotate(180deg); color: #666; }
table { width: 100%; height: 100%; table-layout: fixed; border-collapse: collapse; }
th { height: 24px; padding: 0 6px; text-align: left; font-weight: 400; }
th:first-child { width: 300px; padding: 0 1px; border-right: 1px solid #e2e2e2; }
td { height: 21px; padding: 0 6px; white-space: nowrap; }
td:first-child { padding-left: 2px; border-right: 1px solid #e6f0fb; }
.rest td { height: auto; }
.name { display: flex; align-items: center; gap: 4px; line-height: 18px; }
.sel td { background: #cce8ff; border-top: 1px dotted #222; border-bottom: 1px dotted #222; }
.sel td:first-child { border-right-color: #cce8ff; border-left: 1px dotted #222; }
.hscroll { display: flex; align-items: center; height: 15px; padding: 0 5px; color: #444; }
.hscroll i { width: 270px; height: 15px; margin: 0 auto 0 6px; background: #cdcdcd; }
.fields { display: grid; grid-template-columns: 96px 246px 107px; row-gap: 6px; align-items: center; margin-top: 10px; }
.fields label { padding-left: 2px; }
.fields button { height: 21px; width: 88px; justify-self: end; background: #e1e1e1; border: 1px solid #adadad; line-height: 18px; }
.fields .primary { border: 2px solid #0078d7; line-height: 16px; }
.grip { position: absolute; right: 2px; bottom: 2px; }
.tip { position: absolute; left: 395px; top: 140px; width: 173px; height: 74px; padding: 3px 5px; border: 1px solid #00000033; background: #ffffff4d; box-shadow: 2px 2px 2px #0000001f; line-height: 17px; color: #00000038; white-space: nowrap; }
.arrows { position: absolute; left: 0; top: 0; width: 800px; height: 520px; filter: drop-shadow(2px 2px 1px #00000066); pointer-events: none; }

/* floating desktop items */
.ime { position: absolute; right: 1px; bottom: 91px; z-index: 3; height: 26px; display: flex; align-items: center; gap: 10px; padding: 0 5px 0 22px; background: #fff; border: 1px solid #b4cbe6; border-radius: 2px; color: #0f6fd6; }
.ime b { font-size: 15px; }
.sogou { position: absolute; left: -15px; top: -5px; }
.brand { position: absolute; right: 10px; bottom: 8px; z-index: 3; display: flex; align-items: center; opacity: 0.85; }
.brand div { display: flex; flex-direction: column; }
.brand strong { font-size: 21px; line-height: 24px; color: #4a90d6; }
.brand em { font: 700 16px/18px "Liberation Sans", sans-serif; color: #6cc76a; }
.meter { position: absolute; right: 0; bottom: 7px; z-index: 4; width: 10px; height: 59px; border: solid #4b4f5c; border-width: 7px 2px 6px 4px; border-radius: 4px 0 0 4px; background: repeating-linear-gradient(transparent 0 1px, #4b4f5c 1px 3px), linear-gradient(#30333c 30%, #f0c94a 31%, #9be36a 60%, #4fe0d8); }
</style>
